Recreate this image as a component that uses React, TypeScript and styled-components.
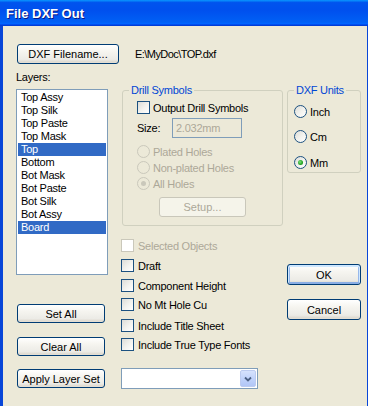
import React from 'react'
import styled, { createGlobalStyle } from 'styled-components'

const GlobalStyle = createGlobalStyle`
  html, body {
    margin: 0;
    padding: 0;
    background: #ECE9D8;
  }
  body {
    font-family: 'Liberation Sans', Arial, sans-serif;
    font-size: 11px;
    letter-spacing: -0.25px;
    color: #000;
  }
`

const Window = styled.div`
  width: 368px;
  height: 406px;
  display: flex;
  flex-direction: column;
  overflow: hidden;
`

const TitleBar = styled.div`
  flex: none;
  height: 26px;
  display: flex;
  align-items: center;
  padding-left: 6px;
  background: linear-gradient(180deg, #0997ff 0%, #0053ee 10%, #0050ee 40%, #0060f5 85%, #0066ff 90%, #005bff 93%, #003dd7 96%, #003dd7 100%);
  color: #fff;
  font: bold 13px 'Liberation Sans', Arial, sans-serif;
  letter-spacing: 0;
  text-shadow: 1px 1px 0 #0a1883;
`

const Body = styled.div`
  flex: 1;
  box-sizing: border-box;
  background: #ECE9D8;
  border-left: 3px solid #0846d8;
  border-right: 1px solid #0846d8;
  padding: 18px 0 0 13px;
`

const TopRow = styled.div`
  display: flex;
  align-items: center;
  gap: 16px;
  height: 20px;
`

const FileName = styled.span`
  font-size: 11px;
  letter-spacing: -0.55px;
`

const MainRow = styled.div`
  margin-top: 7px;
  display: flex;
  align-items: flex-start;
`

const Column = styled.div<{ $w: number; $ml?: number }>`
  flex: none;
  width: ${({ $w }) => $w}px;
  margin-left: ${({ $ml = 0 }) => $ml}px;
  display: flex;
  flex-direction: column;
  align-items: flex-start;
`

const Label = styled.div`
  height: 12px;
  line-height: 12px;
`

const ListBox = styled.ul`
  margin: 6px 0 0;
  padding: 1px;
  list-style: none;
  width: 92px;
  height: 186px;
  box-sizing: border-box;
  border: 1px solid #7f9db9;
  background: #fff;
`

const ListItem = styled.li<{ $selected?: boolean }>`
  height: 13px;
  line-height: 13px;
  padding-left: 3px;
  white-space: nowrap;
  background: ${({ $selected }) => ($selected ? '#316ac5' : 'transparent')};
  color: ${({ $selected }) => ($selected ? '#fff' : '#000')};
`

const Button = styled.button<{ $w: number; $h: number; $mt?: number; $ml?: number; $default?: boolean }>`
  width: ${({ $w }) => $w}px;
  height: ${({ $h }) => $h}px;
  margin: ${({ $mt = 0 }) => $mt}px 0 0 ${({ $ml = 0 }) => $ml}px;
  padding: 0;
  box-sizing: border-box;
  border: 1px solid #003c74;
  border-radius: 3px;
  background: linear-gradient(180deg, #ffffff 0%, #f6f5f0 35%, #ecebe6 80%, #d8d2c6 100%);
  font: inherit;
  color: #000;
  white-space: nowrap;
  box-shadow: ${({ $default }) =>
    $default
      ? 'inset 0 1px 0 1px #cee7ff, inset 0 -1px 0 1px #89ade4, inset 0 0 0 2px #98b8ea'
      : 'inset 0 -1px 0 #e3ded3'};

  &:disabled {
    border-color: #c9c7ba;
    background: #f5f4ea;
    color: #aca899;
    box-shadow: none;
  }
`

const Group = styled.fieldset<{ $ml?: number; $pb: number }>`
  margin: 13px 0 0 ${({ $ml = 0 }) => $ml}px;
  padding: 0 0 ${({ $pb }) => $pb}px 6px;
  align-self: stretch;
  min-width: 0;
  border: 1px solid #d0d0bf;
  border-radius: 3px;
`

const Legend = styled.legend`
  padding: 0 2px;
  height: 13px;
  line-height: 13px;
  color: #0046d5;
`

const GroupBody = styled.div<{ $pl: number }>`
  display: flex;
  flex-direction: column;
  align-items: flex-start;
  padding-left: ${({ $pl }) => $pl}px;
`

const OptionRow = styled.div<{ $mt?: number; $disabled?: boolean; $gap?: number }>`
  display: flex;
  align-items: center;
  gap: ${({ $gap = 3 }) => $gap}px;
  height: 13px;
  margin-top: ${({ $mt = 0 }) => $mt}px;
  white-space: nowrap;
  color: ${({ $disabled }) => ($disabled ? '#aca899' : '#000')};
`

const CheckBox = styled.span<{ $disabled?: boolean }>`
  flex: none;
  width: 13px;
  height: 13px;
  box-sizing: border-box;
  border: 1px solid ${({ $disabled }) => ($disabled ? '#cac8bb' : '#1c5180')};
  background: ${({ $disabled }) =>
    $disabled ? '#fff' : 'linear-gradient(135deg, #dcdcd7 0%, #f3f3ef 55%, #ffffff 100%)'};
`

const Radio = styled.span<{ $checked?: boolean; $disabled?: boolean }>`
  flex: none;
  width: 13px;
  height: 13px;
  box-sizing: border-box;
  border-radius: 50%;
  display: flex;
  align-items: center;
  justify-content: center;
  border: 1px solid ${({ $disabled }) => ($disabled ? '#cac8bb' : '#1c5180')};
  background: ${({ $disabled }) =>
    $disabled ? 'transparent' : 'linear-gradient(135deg, #dcdcd7 0%, #f3f3ef 55%, #ffffff 100%)'};

  &::after {
    content: '';
    width: 5px;
    height: 5px;
    border-radius: 50%;
    background: ${({ $checked, $disabled }) =>
      !$checked ? 'transparent' : $disabled ? '#cac8bb' : 'radial-gradient(circle at 40% 40%, #7ee37e 0%, #21a121 60%, #1a8a1a 100%)'};
  }
`

const SizeRow = styled.div`
  display: flex;
  align-items: center;
  margin-top: 4px;
  height: 20px;
`

const SizeLabel = styled.span`
  width: 35px;
`

const SizeInput = styled.div`
  width: 70px;
  height: 20px;
  box-sizing: border-box;
  border: 1px solid #7f9db9;
  padding-left: 3px;
  line-height: 18px;
  color: #aca899;
`

const Combo = styled.div`
  margin-top: 17px;
  width: 137px;
  height: 21px;
  box-sizing: border-box;
  border: 1px solid #7f9db9;
  background: #fff;
  padding: 1px;
  display: flex;
  justify-content: flex-end;
`

const ComboButton = styled.div`
  width: 16px;
  height: 17px;
  box-sizing: border-box;
  border: 1px solid #bccbf0;
  border-radius: 2px;
  background: linear-gradient(180deg, #d6e2fd 0%, #c1d3fb 50%, #b1c6f6 100%);
  display: flex;
  align-items: center;
  justify-content: center;
`

const layers = ['Top Assy', 'Top Silk', 'Top Paste', 'Top Mask', 'Top', 'Bottom', 'Bot Mask', 'Bot Paste', 'Bot Silk', 'Bot Assy', 'Board']
const selected = ['Top', 'Board']

const options = [
  { label: 'Selected Objects', mt: 13, disabled: true },
  { label: 'Draft', mt: 7 },
  { label: 'Component Height', mt: 7 },
  { label: 'No Mt Hole Cu', mt: 6 },
  { label: 'Include Title Sheet', mt: 8 },
  { label: 'Include True Type Fonts', mt: 6 },
]

const App: React.FC = () => {
  return (
    <Window>
      <GlobalStyle />
      <TitleBar>File DXF Out</TitleBar>
      <Body>
        <TopRow>
          <Button $w={102} $h={20} $ml={1}>DXF Filename...</Button>
          <FileName>E:\MyDoc\TOP.dxf</FileName>
        </TopRow>

        <MainRow>
          <Column $w={92}>
            <Label>Layers:</Label>
            <ListBox>
              {layers.map((name) => (
                <ListItem key={name} $selected={selected.includes(name)}>{name}</ListItem>
              ))}
            </ListBox>
            <Button $w={88} $h={19} $mt={29} $ml={1}>Set All</Button>
            <Button $w={88} $h={19} $mt={14} $ml={1}>Clear All</Button>
            <Button $w={88} $h={19} $mt={13} $ml={1}>Apply Layer Set</Button>
          </Column>

          <Column $w={162} $ml={13}>
            <Group $ml={1} $pb={8}>
              <Legend>Drill Symbols</Legend>
              <GroupBody $pl={8}>
                <OptionRow $mt={4}>
                  <CheckBox />
                  Output Drill Symbols
                </OptionRow>
                <SizeRow>
                  <SizeLabel>Size:</SizeLabel>
                  <SizeInput>2.032mm</SizeInput>
                </SizeRow>
                <OptionRow $mt={7} $disabled>
                  <Radio $disabled />
                  Plated Holes
                </OptionRow>
                <OptionRow $mt={3} $disabled>
                  <Radio $disabled />
                  Non-plated Holes
                </OptionRow>
                <OptionRow $mt={3} $disabled>
                  <Radio $disabled $checked />
                  All Holes
                </OptionRow>
                <Button $w={87} $h={20} $mt={7} $ml={22} disabled>Setup...</Button>
              </GroupBody>
            </Group>

            {options.map((o) => (
              <OptionRow key={o.label} $mt={o.mt} $gap={4} $disabled={o.disabled}>
                <CheckBox $disabled={o.disabled} />
                {o.label}
              </OptionRow>
            ))}

            <Combo>
              <ComboButton>
                <svg width="8" height="6" viewBox="0 0 8 6">
                  <path d="M1 1.5 L4 4.5 L7 1.5" fill="none" stroke="#4d6185" strokeWidth="1.8" />
                </svg>
              </ComboButton>
            </Combo>
          </Column>

          <Column $w={74} $ml={4}>
            <Group $pb={3}>
              <Legend>DXF Units</Legend>
              <GroupBody $pl={0}>
                <OptionRow $mt={8}>
                  <Radio />
                  Inch
                </OptionRow>
                <OptionRow $mt={12}>
                  <Radio />
                  Cm
                </OptionRow>
                <OptionRow $mt={13}>
                  <Radio $checked />
                  Mm
                </OptionRow>
              </GroupBody>
            </Group>
            <Button $w={74} $h={21} $mt={91} $default>OK</Button>
            <Button $w={74} $h={21} $mt={14}>Cancel</Button>
          </Column>
        </MainRow>
      </Body>
    </Window>
  )
}

export default App
